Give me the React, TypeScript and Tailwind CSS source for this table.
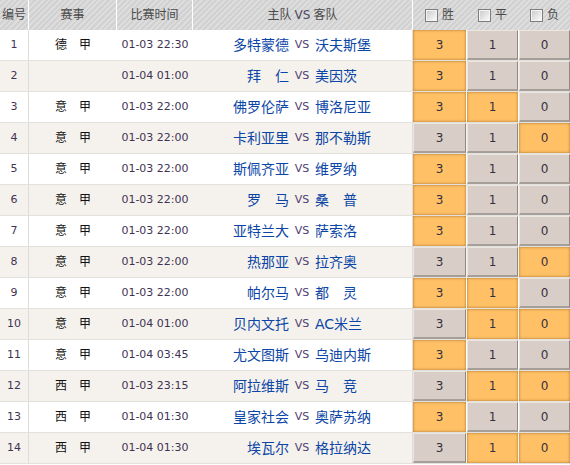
import React from "react";

type Row = {
  no: number;
  league: string;
  time: string;
  home: string;
  away: string;
  picks: string[];
};

const ROWS: Row[] = [
  { no: 1, league: "德　甲", time: "01-03 22:30", home: "多特蒙德", away: "沃夫斯堡", picks: ["3"] },
  { no: 2, league: "", time: "01-04 01:00", home: "拜　仁", away: "美因茨", picks: ["3"] },
  { no: 3, league: "意　甲", time: "01-03 22:00", home: "佛罗伦萨", away: "博洛尼亚", picks: ["3", "1"] },
  { no: 4, league: "意　甲", time: "01-03 22:00", home: "卡利亚里", away: "那不勒斯", picks: ["0"] },
  { no: 5, league: "意　甲", time: "01-03 22:00", home: "斯佩齐亚", away: "维罗纳", picks: ["3"] },
  { no: 6, league: "意　甲", time: "01-03 22:00", home: "罗　马", away: "桑　普", picks: ["3"] },
  { no: 7, league: "意　甲", time: "01-03 22:00", home: "亚特兰大", away: "萨索洛", picks: ["3"] },
  { no: 8, league: "意　甲", time: "01-03 22:00", home: "热那亚", away: "拉齐奥", picks: ["0"] },
  { no: 9, league: "意　甲", time: "01-03 22:00", home: "帕尔马", away: "都　灵", picks: ["3", "1"] },
  { no: 10, league: "意　甲", time: "01-04 01:00", home: "贝内文托", away: "AC米兰", picks: ["1", "0"] },
  { no: 11, league: "意　甲", time: "01-04 03:45", home: "尤文图斯", away: "乌迪内斯", picks: ["3"] },
  { no: 12, league: "西　甲", time: "01-03 23:15", home: "阿拉维斯", away: "马　竞", picks: ["1", "0"] },
  { no: 13, league: "西　甲", time: "01-04 01:30", home: "皇家社会", away: "奥萨苏纳", picks: ["3"] },
  { no: 14, league: "西　甲", time: "01-04 01:30", home: "埃瓦尔", away: "格拉纳达", picks: ["1", "0"] },
];

const FONT = "font-['DejaVu_Sans','Noto_Sans_CJK_SC',sans-serif]";

function Checkbox() {
  return (
    <span className="inline-block w-[13px] h-[13px] border border-[#7d7d7d] bg-gradient-to-br from-[#c8c8c8] to-white shadow-[inset_0_0_0_1px_#f4f4f4]" />
  );
}

function PickButton({ label, on }: { label: string; on: boolean }) {
  return on ? (
    <div className="h-full flex items-center justify-center bg-[#ffc066] shadow-[inset_0_0_3px_#a8722a] text-[12px] text-[#35303d]">
      {label}
    </div>
  ) : (
    <div className="h-full flex items-center justify-center bg-[#d9cec7] border-t border-l border-[#ece6e1] border-r border-r-[#8f8882] border-b-2 border-b-[#a69e98] text-[12px] text-[#35303d]">
      {label}
    </div>
  );
}

export default function App() {
  return (
    <div className={`w-[570px] h-[465px] bg-white overflow-hidden ${FONT}`}>
      {/* header */}
      <div className="flex h-[30px] text-[12px] text-[#4a4a4a] bg-[repeating-linear-gradient(135deg,#d1d1d1_0px,#d1d1d1_2px,#dddddd_2px,#dddddd_4px)]">
        <div className="w-[29px] border-r border-white flex items-center justify-center">编号</div>
        <div className="w-[88px] border-r border-white flex items-center justify-center">赛事</div>
        <div className="w-[76px] border-r border-white flex items-center justify-center">比赛时间</div>
        <div className="w-[220px] border-r border-white flex items-center justify-center gap-[3px]">
          <span>主队</span>
          <span className="text-[12px] text-[#4d4860]">VS</span>
          <span>客队</span>
        </div>
        <div className="flex-1 grid grid-cols-[53px_51px_51px] gap-px">
          {["胜", "平", "负"].map((t) => (
            <div key={t} className="flex items-center justify-center gap-[4px]">
              <Checkbox />
              <span>{t}</span>
            </div>
          ))}
        </div>
      </div>

      {/* body */}
      {ROWS.map((r, i) => (
        <div
          key={r.no}
          className={`flex h-[31px] border-b border-[#e3e1de] ${i % 2 === 0 ? "bg-white" : "bg-[#f5f2ed]"}`}
        >
          <div className="w-[29px] border-r border-[#dedcda] flex items-center justify-center text-[11px] text-[#3f3354]">
            {r.no}
          </div>
          <div className="w-[88px] flex items-center justify-center text-[12px] text-[#111]">
            {r.league}
          </div>
          <div className="w-[76px] flex items-center justify-center text-[11px] text-[#3f3354]">
            {r.time}
          </div>
          <div className="w-[220px] border-r border-[#dedcda] flex items-center">
            <span className="w-[96px] text-right text-[14px] text-[#0b45a6]">{r.home}</span>
            <span className="w-[26px] text-center text-[11px] text-[#4f4070]">VS</span>
            <span className="flex-1 text-left text-[14px] text-[#0b45a6]">{r.away}</span>
          </div>
          <div className="flex-1 grid grid-cols-[53px_51px_51px] gap-px">
            {["3", "1", "0"].map((p) => (
              <PickButton key={p} label={p} on={r.picks.includes(p)} />
            ))}
          </div>
        </div>
      ))}
    </div>
  );
}
